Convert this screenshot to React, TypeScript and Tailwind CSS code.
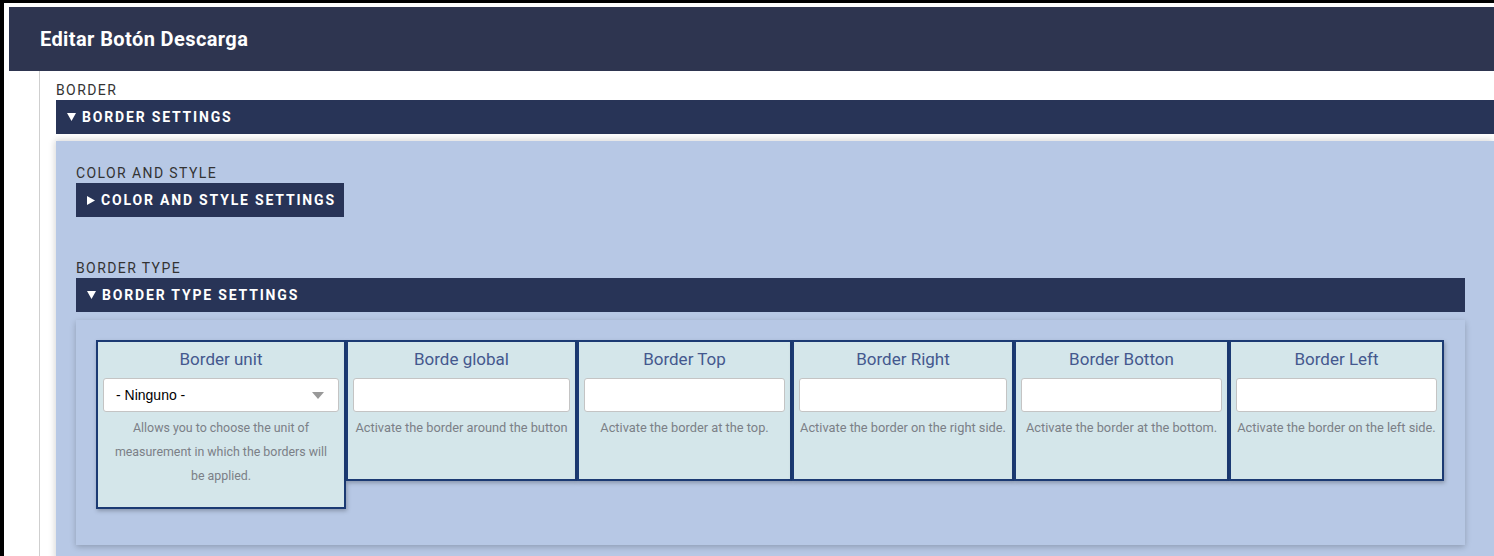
const cards = [
  { title: "Border unit", desc: "Allows you to choose the unit of measurement in which the borders will be applied.", w: "w-[250px]", h: "h-[169px]", select: true, d: "px-[8px] text-[12.4px]" },
  { title: "Borde global", desc: "Activate the border around the button", w: "w-[231px]", h: "h-[141px]", d: "-mx-[3px] text-[12.8px]" },
  { title: "Border Top", desc: "Activate the border at the top.", w: "w-[215px]", h: "h-[141px]", d: "-mx-[3px] text-[12.8px]" },
  { title: "Border Right", desc: "Activate the border on the right side.", w: "w-[222px]", h: "h-[141px]", d: "-mx-[3px] text-[12.8px]" },
  { title: "Border Botton", desc: "Activate the border at the bottom.", w: "w-[215px]", h: "h-[141px]", d: "-mx-[3px] text-[12.8px]" },
  { title: "Border Left", desc: "Activate the border on the left side.", w: "w-[215px]", h: "h-[141px]", d: "-mx-[3px] text-[12.8px]" },
]

function Label({ children }: { children: string }) {
  return (
    <p className="h-[19px] text-[14px] leading-[18px] tracking-[0.1em] text-[#333]">{children}</p>
  )
}

function Bar({ open, children, full }: { open?: boolean; children: string; full?: boolean }) {
  return (
    <div
      className={
        full
          ? "flex h-[34px] items-center gap-[6px] bg-[#283457] pl-[11px] pr-[8px] text-[14px] font-bold tracking-[0.13em] text-white"
          : "inline-flex h-[34px] items-center gap-[6px] bg-[#283457] pl-[11px] pr-[8px] text-[14px] font-bold tracking-[0.13em] text-white"
      }
    >
      {open ? (
        <svg width="9" height="8" viewBox="0 0 9 8">
          <path d="M0 0h9L4.5 8z" fill="#fff" />
        </svg>
      ) : (
        <svg width="8" height="9" viewBox="0 0 8 9">
          <path d="M0 0l8 4.5L0 9z" fill="#fff" />
        </svg>
      )}
      <span>{children}</span>
    </div>
  )
}

function Card({ c }: { c: (typeof cards)[number] }) {
  return (
    <div className={`${c.w} ${c.h} shrink-0 border-2 border-[#1b3a73] bg-[#d4e6ea] px-[5px] pt-[7px] shadow-[1px_2px_4px_rgba(0,0,0,0.25)]`}>
      <p className="h-[20px] text-center text-[17px] leading-[20px] text-[#44588e]">{c.title}</p>
      {c.select ? (
        <div className="mt-[9px] flex h-[34px] items-center justify-between rounded-[3px] border border-[#c4c4c4] bg-white pl-[12px] pr-[14px] font-['Liberation_Sans',Arial,sans-serif] text-[14px] text-black">
          <span>- Ninguno -</span>
          <svg width="12" height="7" viewBox="0 0 12 7">
            <path d="M0 0h12L6 7z" fill="#999" />
          </svg>
        </div>
      ) : (
        <div className="mt-[9px] h-[34px] rounded-[3px] border border-[#c4c4c4] bg-white" />
      )}
      <p className={`${c.d} mt-[4px] text-center leading-[24px] text-[#7b8087]`}>{c.desc}</p>
    </div>
  )
}

export default function App() {
  return (
    <div className="min-h-[556px] overflow-hidden border-l-4 border-t-[3px] border-black bg-white font-['Roboto','Noto_Sans',sans-serif]">
      {/* header */}
      <div className="ml-[5px] mt-[4px] flex h-[64px] items-center bg-[#2e3550] px-[31px]">
        <h1 className="text-[20px] font-bold tracking-[0.02em] text-white">Editar Botón Descarga</h1>
      </div>

      <div className="ml-[35px] min-h-[485px] border-l border-[#cfcfcf] pl-[16px] pt-[10px]">
        <Label>BORDER</Label>
        <Bar open full>BORDER SETTINGS</Bar>

        {/* border settings panel */}
        <div className="mt-[7px] min-h-[420px] bg-[#b7c8e5] pl-[20px] pr-[29px] pt-[23px] shadow-[0_-3px_6px_rgba(0,0,0,0.08),-3px_0_6px_rgba(0,0,0,0.08)]">
          <Label>COLOR AND STYLE</Label>
          <Bar>COLOR AND STYLE SETTINGS</Bar>

          <div className="mt-[42px]">
            <Label>BORDER TYPE</Label>
            <Bar open full>BORDER TYPE SETTINGS</Bar>
          </div>

          <div className="mt-[8px] h-[225px] bg-[#b7c8e5] pl-[20px] pt-[20px] shadow-[0_2px_6px_rgba(0,0,0,0.22)]">
            <div className="flex items-start">
              {cards.map((c) => (
                <Card key={c.title} c={c} />
              ))}
            </div>
          </div>
        </div>
      </div>
    </div>
  )
}
